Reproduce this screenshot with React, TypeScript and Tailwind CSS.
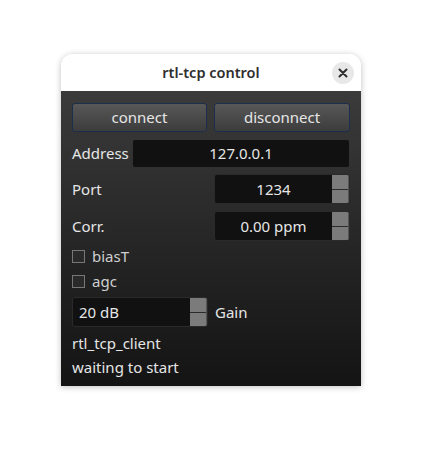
import React from "react";

function Spin({ value, align = "center", w }: { value: string; align?: "center" | "left"; w: string }) {
  return (
    <div className={`flex h-[30px] ${w} rounded-[3px] bg-[#111111] border border-[#2a2a2a] overflow-hidden`}>
      <div className={`flex-1 flex items-center ${align === "center" ? "justify-center" : "justify-start pl-[6px]"} text-[#e6e6e6] text-[15px]`}>
        {value}
      </div>
      <div className="w-[17px] flex flex-col bg-[#7b7b7b] border-r border-[#555]">
        <div className="flex-1 border-b border-[#2a2a2a]" />
        <div className="flex-1" />
      </div>
    </div>
  );
}

function Check({ label }: { label: string }) {
  return (
    <div className="flex items-center gap-[7px] h-[20px]">
      <div className="w-[13px] h-[13px] border border-[#777] bg-[#2a2a2a]" />
      <span className="text-[#cfcfcf] text-[15px]">{label}</span>
    </div>
  );
}

export default function App() {
  return (
    <div
      className="w-[422px] h-[454px] bg-white flex items-start justify-center pt-[54px]"
      style={{ fontFamily: '"Noto Sans", "Open Sans", sans-serif' }}
    >
      <div className="w-[300px] rounded-t-[12px] overflow-hidden shadow-[0_1px_6px_rgba(0,0,0,0.25)]">
        <div className="h-[37px] bg-white flex items-center justify-center relative">
          <span className="text-[14.5px] font-semibold text-[#2e2e2e]">rtl-tcp control</span>
          <div className="absolute right-[7px] top-[8px] w-[22px] h-[22px] rounded-full bg-[#e8e8e8] flex items-center justify-center">
            <svg width="10" height="10" viewBox="0 0 10 10">
              <path d="M1.5 1.5 L8.5 8.5 M8.5 1.5 L1.5 8.5" stroke="#2e2e2e" strokeWidth="2" strokeLinecap="round" />
            </svg>
          </div>
        </div>
        <div className="h-[295px] bg-gradient-to-b from-[#3b3b3b] to-[#141414] px-[11px] pt-[12px] flex flex-col text-[#e6e6e6] text-[15px]">
          <div className="flex gap-[7px]">
            <div className="w-[135px] h-[29px] rounded-[3px] border border-[#1c2e4e] bg-gradient-to-b from-[#585858] to-[#3c3c3c] flex items-center justify-center">
              connect
            </div>
            <div className="w-[136px] h-[29px] rounded-[3px] border border-[#1c2e4e] bg-gradient-to-b from-[#585858] to-[#3c3c3c] flex items-center justify-center">
              disconnect
            </div>
          </div>
          <div className="flex items-center mt-[8px] h-[27px]">
            <span className="w-[61px]">Address</span>
            <div className="flex-1 h-[27px] rounded-[2px] bg-[#111111] flex items-center justify-center mr-[1px]">127.0.0.1</div>
          </div>
          <div className="flex items-center justify-between mt-[7px]">
            <span>Port</span>
            <Spin value="1234" w="w-[136px]" />
          </div>
          <div className="flex items-center justify-between mt-[7px]">
            <span>Corr.</span>
            <Spin value="0.00 ppm" w="w-[136px]" />
          </div>
          <div className="mt-[5px] flex flex-col gap-[5px]">
            <Check label="biasT" />
            <Check label="agc" />
          </div>
          <div className="flex items-center gap-[7px] mt-[6px]">
            <Spin value="20 dB" align="left" w="w-[136px]" />
            <span>Gain</span>
          </div>
          <div className="mt-[4px] leading-[24px]">rtl_tcp_client</div>
          <div className="leading-[24px]">waiting to start</div>
        </div>
      </div>
    </div>
  );
}
